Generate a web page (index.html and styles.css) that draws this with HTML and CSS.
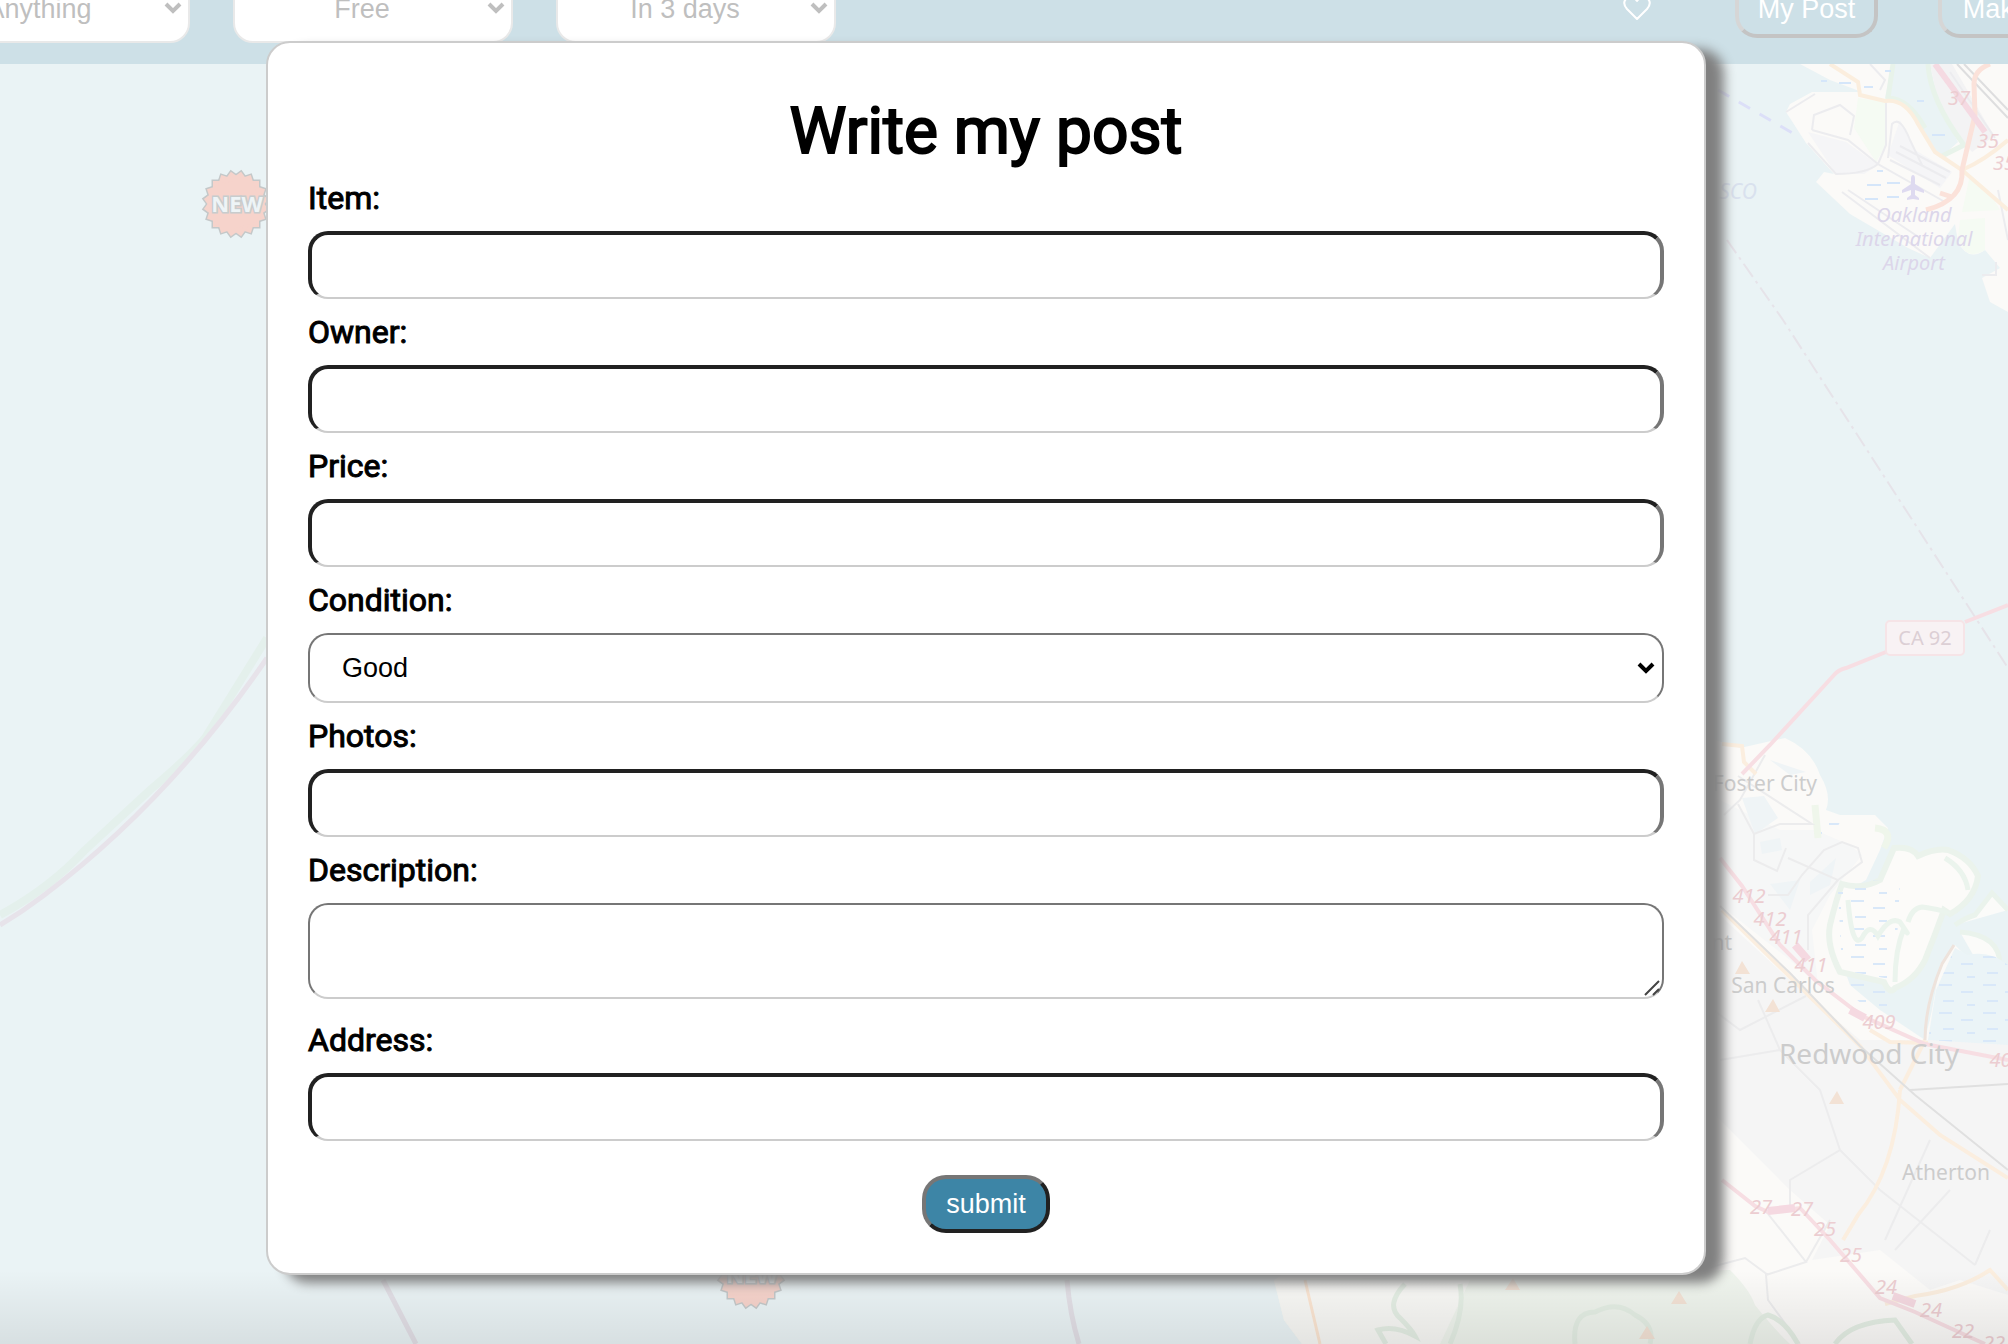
FILE: index.html
```html
<!DOCTYPE html>
<html lang="en">
<head>
<meta charset="utf-8">
<title>Write my post</title>
<link rel="stylesheet" href="styles.css">
</head>
<body>
<svg class="map" viewBox="0 0 2008 1344" preserveAspectRatio="xMaxYMin slice" aria-hidden="true">
  <defs>
    <g id="burst">
      <rect x="-23" y="-23" width="46" height="46"/>
      <rect x="-23" y="-23" width="46" height="46" transform="rotate(18)"/>
      <rect x="-23" y="-23" width="46" height="46" transform="rotate(36)"/>
      <rect x="-23" y="-23" width="46" height="46" transform="rotate(54)"/>
      <rect x="-23" y="-23" width="46" height="46" transform="rotate(72)"/>
    </g>
    <g id="badge">
      <use href="#burst" fill="#ccc" stroke="#c4c8c9" stroke-width="3"/>
      <use href="#burst" fill="#f6d3cb"/>
      <text class="badge-text" x="1" y="8" text-anchor="middle">NEW</text>
    </g>
    <pattern id="marsh" width="44" height="28" patternUnits="userSpaceOnUse">
      <path d="M3 5h13M25 12h12M7 21h11M31 25h8" stroke="#d9e8f9" stroke-width="2"/>
    </pattern>
    <linearGradient id="fade" x1="0" y1="0" x2="0" y2="1">
      <stop offset="0" stop-color="#000" stop-opacity="0"/>
      <stop offset="1" stop-color="#000" stop-opacity=".08"/>
    </linearGradient>
  </defs>

  <!-- maritime boundaries -->
  <g fill="none">
    <path d="M267 638Q235 690 205 738Q188 758 150 790L85 850Q50 888 0 915" stroke="#e4f0ec" stroke-width="8"/>
    <path d="M267 658Q170 800 43 896Q22 912 0 925" stroke="#e7e3ea" stroke-width="5"/>
    <path d="M383 1280L416 1344M1067 1280Q1070 1315 1079 1344" stroke="#e2dfe6" stroke-width="5"/>
    <path d="M1727 240L1783 320L1975 617L2008 668" stroke="#e6e3e9" stroke-width="2" stroke-dasharray="16 5 3 5"/>
    <path d="M1718 90L1796 135" stroke="#dcdff8" stroke-width="3" stroke-dasharray="13 11"/>
  </g>

  <!-- Oakland and the airport -->
  <path d="M1800 64H2008V312L1990 302L1982 278L2000 268L1985 250Q1968 262 1958 242L1955 224L1930 258L1908 248L1850 214L1816 182L1824 172L1834 174L1806 143L1786 112L1790 104L1812 92H1862L1830 80Z" fill="#fbfaf8"/>
  <path d="M1892 64H1930Q1936 100 1958 142L1940 158L1905 102L1885 98Z" fill="#eaf3f5"/>
  <path d="M1930 64H1952L1994 136L1972 152L1940 110Z" fill="#f3f3f4"/>
  <path d="M1858 98L1886 102V145L1876 162L1854 128ZM1970 175L1988 190L2000 210L1962 212ZM1960 220L1985 218V250Q1965 262 1958 238Z" fill="#f5fbf3"/>
  <path d="M1808 132L1846 142L1878 165L1864 174L1836 174ZM1888 155L1900 120L1915 150L1952 172L1940 188Z" fill="#f5f5f7"/>
  <g fill="none" stroke="#ececef" stroke-width="2">
    <path d="M1786 112L1815 94M1812 130L1814 115L1840 105L1854 116L1850 135M1812 130L1848 140L1878 164Q1866 174 1836 174L1808 143M1886 100V145L1878 164L1945 202M1888 158L1892 124Q1900 115 1910 140L1922 165M1890 160L1940 185M1896 152L1946 178M1900 146L1950 172M1842 192L1930 258M1848 190L1920 238M1870 64L1885 80L1880 90M1950 72L1995 138M1998 190L2008 240M1982 275H1996V262"/>
  </g>
  <path d="M1893 64L1888 98Q1908 98 1925 128M1928 64Q1930 100 1964 145L1942 156" fill="none" stroke="#e8f3ea" stroke-width="5"/>
  <path d="M1957 64L2008 118M1964 64L2008 110" fill="none" stroke="#dededf" stroke-width="2"/>
  <path d="M1830 64L1858 82L1860 95L1885 101Q1905 98 1918 124L1935 152L1962 170L2008 210M1962 170Q1985 160 2008 140" fill="none" stroke="#fbeede" stroke-width="4"/>
  <path d="M1990 64Q1974 70 1974 84L1975 115L1962 170Q1964 200 1926 210M1940 193L1952 197" fill="none" stroke="#fbe2da" stroke-width="5"/>
  <path d="M1935 64L1985 132" fill="none" stroke="#f5dae2" stroke-width="6"/>
  <path d="M1821 81H1827M1839 83H1851M1864 87H1873M1885 71H1891M1917 101H1924M1932 135H1945M1867 185H1881M1887 183H1900M1865 199H1878M1887 197H1899M1877 171H1883" stroke="#d5e6fa" stroke-width="2"/>
  <path d="M1913 175q2 0 2 4v5l9 6v3l-9-3v5l4 3v2l-6-1l-6 1v-2l4-3v-5l-9 3v-3l9-6v-5q0-4 2-4z" fill="#dedaf0"/>

  <!-- peninsula -->
  <path d="M1700 735L1740 748L1785 738Q1812 750 1820 775Q1832 795 1826 810L1840 815H1875L1888 828L1880 850L1866 880L1840 895L1830 930L1850 985L1880 1010L1925 1040L1932 1010L1940 965L1955 945L2008 1000V1344H1302L1284 1320L1274 1280L1400 1200L1700 1000Z" fill="#fbfaf8"/>
  <path d="M1700 790L1780 830H1815L1850 845L1862 855L1830 895L1812 930L1818 985L1790 960L1720 905Z" fill="#f6f7f7"/>
  <path d="M1700 890L1725 920L1790 980L1860 1040H2008V1295L1960 1280L1930 1290L1880 1250L1812 1260L1830 1225L1790 1190L1700 1100Z" fill="#f5f5f5"/>
  <path d="M1842 884Q1862 890 1880 880L1894 848Q1912 846 1918 856Q1935 848 1948 850Q1970 858 1978 876Q1975 900 1950 914L1944 910Q1935 935 1925 960Q1915 980 1895 988Q1890 995 1884 982L1840 972Q1826 945 1830 925Q1836 900 1842 884Z" fill="#fcfbf9" stroke="#ebf3ec" stroke-width="6"/>
  <path d="M1838 890L1862 880L1900 882L1895 980L1842 970ZM1838 982H1888L1900 1005L1870 1012ZM1820 818L1840 822L1828 846L1812 840Z" fill="url(#marsh)"/>
  <path d="M1955 925Q1965 918 1975 915L1992 893L2008 910M1960 932Q2000 935 2000 965Q1985 975 1992 988" fill="#fbfbf9" stroke="#eaf3ec" stroke-width="5"/>
  <path d="M1848 900Q1852 950 1862 938Q1870 922 1878 936Q1890 916 1900 922Q1912 940 1904 928Q1895 950 1895 982M1908 922Q1912 908 1922 907Q1945 910 1948 914M1945 858Q1965 870 1968 890" fill="none" stroke="#ebf4ed" stroke-width="5"/>
  <path d="M1955 948L1968 955Q1990 950 2008 965V1045L1928 1040L1936 990Z" fill="#ebf4f7"/>
  <path d="M1955 948L1968 955Q1990 950 2008 965V1045L1928 1040L1936 990Z" fill="url(#marsh)"/>
  <path d="M1742 798L1764 796L1778 818L1755 834ZM1760 842L1780 838L1782 850L1762 854ZM1770 760L1806 772L1790 775ZM1810 882L1836 858L1830 885L1810 895ZM1770 884L1800 880L1790 910Z" fill="#eff4f6"/>
  <path d="M1875 828Q1895 830 1884 848M1815 805L1818 838" fill="none" stroke="#eff6eb" stroke-width="7"/>
  <g fill="none" stroke="#ececed" stroke-width="2">
    <path d="M1724 815L1740 800L1765 755M1738 804L1754 834L1780 824H1812L1738 776M1754 834V860L1777 871L1786 848M1788 858L1838 880L1808 915V950M1838 880L1862 862L1858 848L1842 842L1824 850L1802 875L1788 895H1768M1700 1000L1740 1030L1806 996M1758 1000L1780 1050L1720 1060M1780 1050L1820 1090L1840 1150L1790 1180V1210M1840 1150L1880 1190L1975 1265M1765 1210L1806 1262L1766 1275L1768 1300L1800 1344M1700 1270L1745 1258L1768 1275M1806 1262L1830 1220M1950 1190L1895 1250M1930 1140L1885 1240M1975 1265L1990 1230"/>
  </g>
  <path d="M1274 1280L1730 1270Q1750 1290 1755 1305Q1775 1330 1790 1344H1302L1284 1320Z" fill="#eff4ed"/>
  <path d="M1274 1280H1470L1440 1344H1302L1284 1320Z" fill="#f8f8f5"/>
  <path d="M1405 1284Q1385 1305 1400 1318Q1412 1330 1415 1336Q1395 1325 1378 1330L1386 1344M1460 1284Q1465 1310 1450 1344M1575 1344Q1572 1312 1595 1312Q1618 1300 1635 1315Q1655 1325 1650 1344M1750 1344Q1755 1318 1768 1315Q1785 1320 1798 1344M1835 1344Q1850 1322 1895 1320L1912 1344" fill="none" stroke="#e4eee4" stroke-width="5"/>
  <path d="M1305 1280L1320 1344" fill="none" stroke="#fbe5d2" stroke-width="3"/>
  <path d="M1722 744L1742 746L1744 762L1756 774M1722 910L1860 1046L1900 1100L1940 1135L2008 1178M1870 1030L1890 1042L1928 1043M1900 1090Q1895 1170 1858 1215L1843 1240M1925 1040L1900 1090M1885 1304L1915 1296Q1960 1290 1990 1270L2008 1290" fill="none" stroke="#fbeedf" stroke-width="4"/>
  <path d="M1720 906L1790 973L1860 1046L1915 1095L2008 1170M1910 1090L2008 1084" fill="none" stroke="#e0e0e0" stroke-width="2"/>
  <path d="M1954 945L1942 964Q1925 1005 1925 1040" fill="none" stroke="#eee3dc" stroke-width="3"/>
  <path d="M2008 605L1965 622M1886 652L1846 668Q1838 670 1834 675L1770 745L1742 774M1720 858L1742 886L1780 945L1815 980L1862 1016L1925 1044L2008 1060M1722 1180L1755 1206L1768 1212L1800 1208L1830 1240L1880 1298L1915 1312L1985 1344" fill="none" stroke="#f7dee3" stroke-width="4"/>
  <path d="M1795 945L1808 960M1850 1010L1865 1018M1768 1211L1795 1208M1893 1296L1915 1304" stroke="#f5d9e1" stroke-width="8"/>
  <g fill="#f3e2d5">
    <path d="M1735 974L1742 961L1750 974ZM1765 1012L1773 999L1780 1012ZM1829 1104L1837 1091L1844 1104ZM1505 1290L1513 1278L1520 1290ZM1671 1304L1679 1291L1687 1304ZM1639 1339L1647 1326L1655 1339Z"/>
  </g>
  <rect x="1886" y="621" width="78" height="34" rx="4" fill="#f8f2f4" stroke="#f6e4e7" stroke-width="2"/>

  <g class="place">
    <text x="1925" y="645" text-anchor="middle" class="shield">CA 92</text>
    <text x="1817" y="791" text-anchor="end">Foster City</text>
    <text x="1732" y="950" text-anchor="end">Belmont</text>
    <text x="1783" y="993" text-anchor="middle">San Carlos</text>
    <text x="1869" y="1064" text-anchor="middle" class="city">Redwood City</text>
    <text x="1946" y="1180" text-anchor="middle">Atherton</text>
  </g>
  <g class="airport" text-anchor="middle">
    <text x="1914" y="222">Oakland</text>
    <text x="1914" y="246">International</text>
    <text x="1914" y="270">Airport</text>
    <text x="1738" y="199" class="bay">SCO</text>
  </g>
  <g class="exit" text-anchor="middle">
    <text x="1959" y="105">37</text>
    <text x="1988" y="148">35</text>
    <text x="2004" y="170">35</text>
    <text x="1749" y="903">412</text>
    <text x="1770" y="926">412</text>
    <text x="1786" y="944">411</text>
    <text x="1811" y="972">411</text>
    <text x="1879" y="1029">409</text>
    <text x="2006" y="1067">408</text>
    <text x="1761" y="1214">27</text>
    <text x="1802" y="1216">27</text>
    <text x="1825" y="1236">25</text>
    <text x="1851" y="1262">25</text>
    <text x="1886" y="1294">24</text>
    <text x="1931" y="1317">24</text>
    <text x="1963" y="1338">22</text>
    <text x="1994" y="1350">22</text>
  </g>
  <use href="#badge" x="236" y="204"/>
  <use href="#badge" x="751" y="1275"/>
  <rect y="1270" width="2008" height="74" fill="url(#fade)"/>
</svg>

<header class="topbar">
  <div class="filters">
    <select class="filter" aria-label="Category"><option>Anything</option></select>
    <select class="filter" aria-label="Price range"><option>Free</option></select>
    <select class="filter" aria-label="Available"><option>In 3 days</option></select>
  </div>
  <nav class="actions">
    <svg class="heart" viewBox="0 0 28 26" aria-hidden="true"><path d="M14 24L4 14Q-1 8 3 4Q9-1 14 6Q19-1 25 4Q29 8 24 14Z" fill="none" stroke="#fff" stroke-width="2" stroke-linejoin="round"/></svg>
    <button class="nav-button" type="button">My Post</button>
    <button class="nav-button" type="button">Make Post</button>
  </nav>
</header>

<main class="modal">
  <h1>Write my post</h1>
  <form>
    <label for="item">Item:</label>
    <input id="item" type="text">
    <label for="owner">Owner:</label>
    <input id="owner" type="text">
    <label for="price">Price:</label>
    <input id="price" type="text">
    <label for="condition">Condition:</label>
    <select id="condition" class="condition"><option>Good</option></select>
    <label for="photos">Photos:</label>
    <input id="photos" type="text">
    <label for="description">Description:</label>
    <div class="area">
      <textarea id="description"></textarea>
      <svg class="grip" viewBox="0 0 16 16" aria-hidden="true"><path d="M1 15L15 1M9 15L15 9" stroke="#444" stroke-width="2"/></svg>
    </div>
    <label for="address">Address:</label>
    <input id="address" type="text">
    <button class="submit" type="submit">submit</button>
  </form>
</main>
</body>
</html>
```
FILE: styles.css
```css
* {
  box-sizing: border-box;
}

body {
  margin: 0;
  min-height: 100vh;
  position: relative;
  overflow: hidden;
  background: #eaf3f5;
  font-family: Roboto, sans-serif;
  color: #000;
}

input,
select,
textarea,
button {
  font-family: "Liberation Sans", Arial, sans-serif;
  font-size: 27px;
}

/* Map behind the page */
.map {
  position: absolute;
  inset: 0;
  width: 100%;
  height: 100%;
  z-index: -1;
  font-family: "Noto Sans", sans-serif;
}

.place {
  font-size: 21px;
  fill: #cccccc;
}

.place .city {
  font-size: 28px;
}

.place .shield {
  font-size: 20px;
  fill: #dccfd5;
}

.airport {
  font-size: 20px;
  font-style: italic;
  fill: #dcd6ea;
}

.airport .bay {
  font-size: 21px;
  fill: #d9e1ee;
}

.exit {
  font-size: 20px;
  font-style: italic;
  fill: #eccdd1;
}

.badge-text {
  font: bold 22px "Open Sans", sans-serif;
  fill: #eef4f6;
  stroke: #c8cccd;
  stroke-width: 3px;
  paint-order: stroke;
}

/* Top bar, partly scrolled off */
.topbar {
  display: flex;
  align-items: center;
  justify-content: space-between;
  height: 112px;
  margin: -48px 0 -23px;
  overflow: hidden;
  background: #cde0e7;
}

.filters {
  display: flex;
  gap: 43px;
  margin-left: -90px;
}

.filter,
.condition {
  appearance: none;
  background: #fff no-repeat right 6px center / 18px 12px;
}

.filter {
  width: 280px;
  height: 70px;
  padding: 2px 42px 0 20px;
  border: 2px solid #e9e9e9;
  border-radius: 20px;
  color: #bfbfbf;
  text-align: center;
  text-align-last: center;
  background-image: url("data:image/svg+xml,%3Csvg xmlns='http://www.w3.org/2000/svg' viewBox='0 0 18 12'%3E%3Cpath d='M2 2L9 9L16 2' fill='none' stroke='%23bfbfbf' stroke-width='4'/%3E%3C/svg%3E");
}

.actions {
  display: flex;
  align-items: center;
  margin-right: -107px;
}

.heart {
  width: 28px;
  height: 26px;
  margin-right: 84px;
}

.nav-button {
  width: 143px;
  height: 60px;
  border: 4px solid;
  border-color: #d6d6d6 #c4c4c4 #c4c4c4 #d6d6d6;
  border-radius: 22px;
  padding: 2px 0 0;
  background: transparent;
  color: #fff;
}

.nav-button + .nav-button {
  width: 177px;
  margin-left: 60px;
}

/* Post form */
.modal {
  position: relative;
  margin: 0 302px 69px 266px;
  padding: 56px 40px 40px;
  border: 2px solid #ccc;
  border-radius: 24px;
  background: #fff;
  box-shadow: 18px 8px 12px #808080;
}

h1 {
  margin: 0;
  font-size: 64px;
  font-weight: 400;
  line-height: 66px;
  text-align: center;
  -webkit-text-stroke: 2px #000;
}

form {
  display: flex;
  flex-direction: column;
}

label {
  font-size: 32px;
  font-weight: 400;
  line-height: 66px;
  -webkit-text-stroke: 1px #000;
}

input,
.condition,
textarea {
  display: block;
  width: 100%;
  border-radius: 20px;
  outline: none;
}

input {
  height: 68px;
  padding: 0 30px;
  border: 4px solid;
  border-width: 4px 4px 2px;
  border-color: #212121 #767676 #ccc #212121;
  background: #fff;
}

.condition {
  height: 70px;
  padding: 0 32px;
  border: 2px solid #767676;
  border-bottom-color: #ccc;
  color: #000;
  background-position: right 7px center;
  background-image: url("data:image/svg+xml,%3Csvg xmlns='http://www.w3.org/2000/svg' viewBox='0 0 18 12'%3E%3Cpath d='M2 2L9 9L16 2' fill='none' stroke='%23000' stroke-width='4'/%3E%3C/svg%3E");
}

.area {
  position: relative;
  margin-bottom: 8px;
}

textarea {
  height: 96px;
  padding: 16px 30px;
  border: 2px solid #767676;
  border-bottom-color: #ccc;
  resize: none;
}

.grip {
  position: absolute;
  right: 4px;
  bottom: 3px;
  width: 16px;
  height: 16px;
}

.submit {
  align-self: center;
  width: 128px;
  height: 58px;
  margin-top: 34px;
  padding: 0;
  border: 4px solid;
  border-color: #767676 #212121 #212121 #767676;
  border-radius: 24px;
  background: #3d85a6;
  color: #fff;
}
```
